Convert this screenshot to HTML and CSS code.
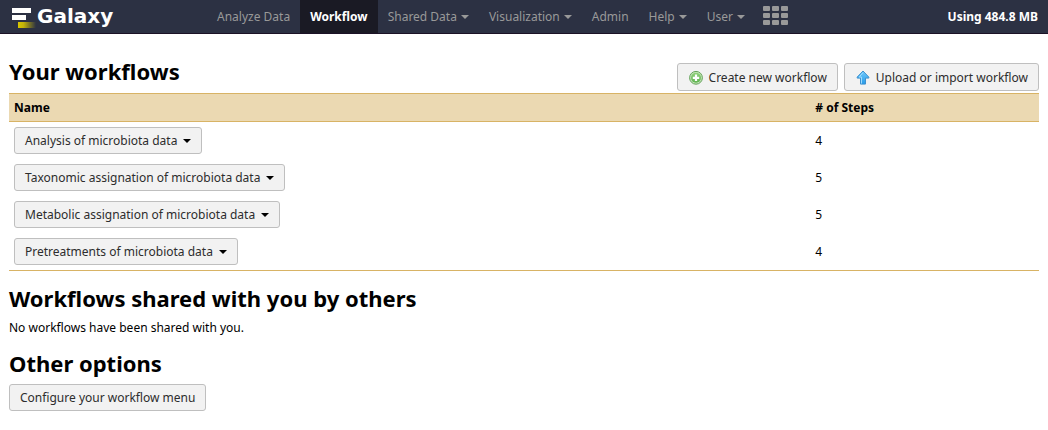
FILE: index.html
```
<!DOCTYPE html>
<html lang="en">
<head>
<meta charset="utf-8">
<title>Galaxy</title>
<link rel="stylesheet" href="styles.css">
</head>
<body>
<header class="masthead">
  <a class="brand" href="#">
    <svg class="brand-logo" width="26" height="22" viewBox="0 0 26 22" aria-hidden="true">
      <defs><linearGradient id="tail"><stop offset="0" stop-color="#d8c600"/><stop offset=".3" stop-color="#c4b408"/><stop offset="1" stop-color="#2c3143"/></linearGradient></defs>
      <path fill="#fff" d="M1 2h19v5H1zM1 9h14v5H1z"/>
      <path fill="url(#tail)" d="M7 16h18v6H7z"/>
    </svg>
    <span>Galaxy</span>
  </a>
  <nav class="nav">
    <a href="#">Analyze Data</a>
    <a class="active" href="#">Workflow</a>
    <a class="menu" href="#">Shared Data</a>
    <a class="menu" href="#">Visualization</a>
    <a href="#">Admin</a>
    <a class="menu" href="#">Help</a>
    <a class="menu" href="#">User</a>
    <a class="apps" href="#" aria-label="Apps">
      <svg width="25" height="20" viewBox="0 0 25 20" fill="#999" aria-hidden="true">
        <rect x="0" y="0" width="7" height="5" rx="1"/><rect x="9" y="0" width="7" height="5" rx="1"/><rect x="18" y="0" width="7" height="5" rx="1"/>
        <rect x="0" y="7" width="7" height="5" rx="1"/><rect x="9" y="7" width="7" height="5" rx="1"/><rect x="18" y="7" width="7" height="5" rx="1"/>
        <rect x="0" y="14" width="7" height="5" rx="1"/><rect x="9" y="14" width="7" height="5" rx="1"/><rect x="18" y="14" width="7" height="5" rx="1"/>
      </svg>
    </a>
  </nav>
  <span class="quota">Using 484.8 MB</span>
</header>
<main class="content">
  <div class="title-row">
    <h2>Your workflows</h2>
    <div class="actions">
      <button class="btn" type="button">
        <svg width="16" height="16" viewBox="0 0 16 16" aria-hidden="true">
          <defs><linearGradient id="green" x2="0" y2="1"><stop offset="0" stop-color="#8fd07a"/><stop offset="1" stop-color="#5fb351"/></linearGradient></defs>
          <circle cx="8" cy="8.8" r="6.4" fill="#c4e5b8" stroke="#64a35a"/>
          <circle cx="8" cy="8.8" r="5" fill="url(#green)"/>
          <path d="M8 5.6v6.4M4.8 8.8h6.4" stroke="#fff" stroke-width="2.2"/>
        </svg>
        Create new workflow
      </button>
      <button class="btn" type="button">
        <svg width="16" height="16" viewBox="0 0 16 16" aria-hidden="true">
          <defs><linearGradient id="blue" x2="0" y2="1"><stop offset="0" stop-color="#70c9fb"/><stop offset="1" stop-color="#279be8"/></linearGradient></defs>
          <path d="M8 2 13.8 8.1v1H10.5v6h-5v-6H2.2v-1z" fill="url(#blue)" stroke="#3d91cf" stroke-linejoin="round"/>
          <path d="M6.5 14.5V8H4.2L8 3.7" fill="none" stroke="#9edcff"/>
        </svg>
        Upload or import workflow
      </button>
    </div>
  </div>
  <table class="workflows">
    <thead><tr><th class="name">Name</th><th># of Steps</th></tr></thead>
    <tbody>
      <tr><td><button class="btn menu" type="button">Analysis of microbiota data</button></td><td>4</td></tr>
      <tr><td><button class="btn menu" type="button">Taxonomic assignation of microbiota data</button></td><td>5</td></tr>
      <tr><td><button class="btn menu" type="button">Metabolic assignation of microbiota data</button></td><td>5</td></tr>
      <tr><td><button class="btn menu" type="button">Pretreatments of microbiota data</button></td><td>4</td></tr>
    </tbody>
  </table>
  <h2>Workflows shared with you by others</h2>
  <p>No workflows have been shared with you.</p>
  <h2>Other options</h2>
  <button class="btn" type="button">Configure your workflow menu</button>
</main>
</body>
</html>
```
FILE: styles.css
```
* { box-sizing: border-box; }
body {
  margin: 0;
  background: #fff;
  color: #000;
  font: 12px/17px "Lucida Grande", "Noto Sans", sans-serif;
}
.masthead {
  display: flex;
  align-items: stretch;
  height: 34px;
  background: #2c3143;
  border-bottom: 1px solid #1b1226;
}
.brand {
  display: flex;
  flex: 0 0 207px;
  align-items: center;
  padding-left: 11px;
  color: #fff;
  font-family: "DejaVu Sans", sans-serif;
  font-size: 20px;
  font-weight: bold;
  text-decoration: none;
}
.brand-logo { margin-top: 1px; }
.nav { display: flex; }
.nav a {
  display: flex;
  align-items: center;
  padding: 0 10px;
  color: #999;
  text-decoration: none;
}
.nav .active {
  background: #1a1a24;
  color: #fff;
  font-weight: bold;
}
.menu::after {
  content: "";
  margin-left: 4px;
  border: 4px solid transparent;
  border-top-color: currentColor;
  border-bottom: 0;
}
.nav .apps { padding: 0 8px 1px; }
.quota {
  margin-left: auto;
  padding-right: 10px;
  align-self: center;
  color: #fff;
  font-weight: bold;
}
.content { padding: 24px 9px 16px; }
h2 {
  margin: 14px 0 8px;
  font-size: 22px;
  line-height: 26px;
}
.title-row {
  display: flex;
  align-items: flex-start;
  justify-content: space-between;
}
.title-row h2 { margin: 0 0 9px; }
.actions {
  display: flex;
  gap: 6px;
  padding-top: 5px;
}
.btn {
  display: inline-flex;
  align-items: center;
  height: 27px;
  padding: 0 10px;
  border: 1px solid #bfbfbf;
  border-radius: 3px;
  background: #f2f2f2;
  color: #2d2d2d;
  font: inherit;
}
.actions .btn { height: 28px; gap: 5px; }
.btn.menu::after {
  margin-left: 6px;
  border-top-color: #000;
}
.workflows {
  width: 100%;
  border-spacing: 0;
  border-top: 1px solid #d8b365;
  border-bottom: 1px solid #d8b365;
}
.workflows th {
  padding: 5px;
  background: #ebd9b2;
  border-bottom: 1px solid #d8b365;
  text-align: left;
}
.workflows .name { width: 77.8%; }
.workflows td { padding: 5px; }
.workflows td .btn { display: flex; }
p { margin: 0 0 14px; }
```
